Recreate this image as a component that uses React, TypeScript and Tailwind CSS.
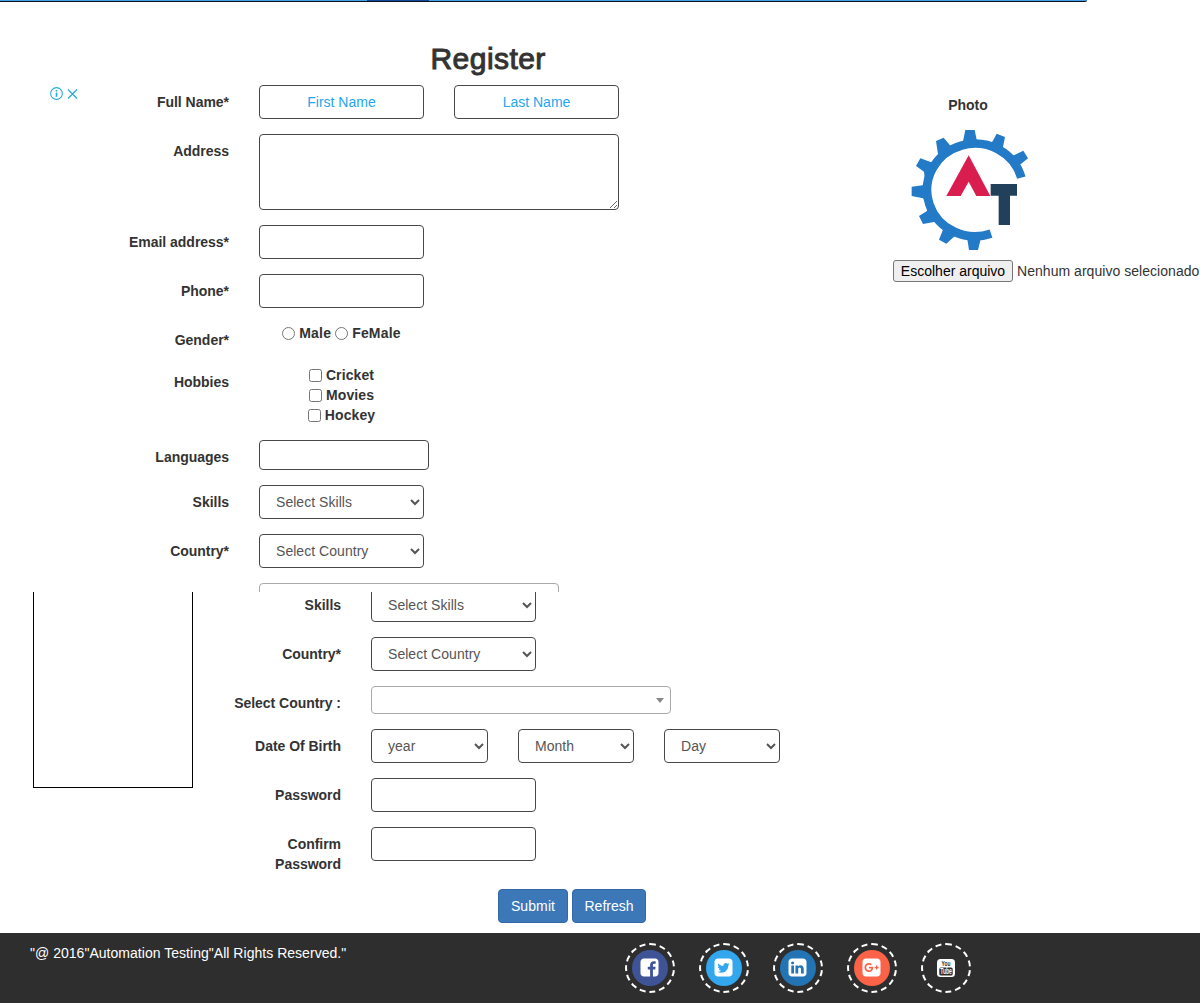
import type { ReactNode } from 'react';

const control = 'h-[34px] rounded border border-[#484848] bg-white text-sm text-[#555]';

function Row({ label, children, wide = false }: { label: string; children: ReactNode; wide?: boolean }) {
  return (
    <div className="flex items-start gap-[30px]">
      <div className={`shrink-0 pt-[7px] text-right font-bold tracking-[-0.03px] ${wide ? 'w-[112px]' : 'w-[109px]'}`}>{label}</div>
      {children}
    </div>
  );
}

function Select({ text, size = 'w-[165px]' }: { text: string; size?: string }) {
  return (
    <select className={`${control} ${size} px-3 py-1.5 tracking-[0.04px]`}>
      <option>{text}</option>
    </select>
  );
}

function Input({ placeholder, size = 'w-[165px]' }: { placeholder?: string; size?: string }) {
  return (
    <input
      className={`${control} ${size} px-3 text-center placeholder:text-[#22a7f0]`}
      placeholder={placeholder}
    />
  );
}

function Check({ text }: { text: string }) {
  return (
    <label className="flex h-5 items-center justify-center gap-1 font-bold tracking-[0.1px]">
      <input type="checkbox" className="size-[13px]" />
      {text}
    </label>
  );
}

function Logo() {
  return (
    <svg viewBox="90 147 360 369" className="ml-[17px] h-[123px] w-[120px]">
      <g fill="#237ac6">
        <path d="M424 293A144 139 0 1 0 333 461" fill="none" stroke="#237ac6" strokeWidth="26" />
        <path d="M256 150H284L291 184L295 192L240 196L249 184Z" />
        <path d="M350 161L375 171L368 206L330 190L338 184Z" />
        <path d="M388 232L397 228L430 212L444 235L420 254L416 272Z" />
        <path d="M168 183L191 173L210 196L220 206L176 232L173 216Z" />
        <path d="M121 235L154 247L166 248L134 292L132 275L108 258Z" />
        <path d="M95 320L128 316L140 310L142 366L129 355L95 348Z" />
        <path d="M117 408L142 392L148 380L178 428L162 426L129 432Z" />
        <path d="M177 479L190 446L188 436L234 464L222 470L199 491Z" />
        <path d="M256 468H308L302 478L294 510H267L262 478Z" />
      </g>
      <path d="M266 226L331 348H289L266 305L242 348H199Z" fill="#d91e4f" />
      <path d="M332 312H411V347H390V435H356V347H332Z" fill="#23405b" />
    </svg>
  );
}

const square =
  'M1664 416v960q0 119-84.5 203.5t-203.5 84.5h-960q-119 0-203.5-84.5t-84.5-203.5v-960q0-119 84.5-203.5t203.5-84.5h960q119 0 203.5 84.5t84.5 203.5z';

const socials = [
  {
    name: 'Facebook',
    bg: 'bg-[#3f5497]',
    d: 'M1376 128q119 0 203.5 84.5t84.5 203.5v960q0 119-84.5 203.5t-203.5 84.5h-188v-595h199l30-232h-229v-148q0-56 23.5-84t91.5-28l122-1v-207q-63-9-178-9-136 0-217.5 80t-81.5 226v171h-200v232h200v595h-532q-119 0-203.5-84.5t-84.5-203.5v-960q0-119 84.5-203.5t203.5-84.5h960z',
  },
  {
    name: 'Twitter',
    bg: 'bg-[#32a7ee]',
    d: 'M1408 610q-56 25-121 34 68-40 93-117-65 38-134 51-61-66-153-66-87 0-148.5 61.5t-61.5 148.5q0 29 5 48-129-7-242-65t-192-155q-29 50-29 106 0 114 91 175-47-1-100-26v2q0 75 50 133.5t123 72.5q-29 8-51 8-13 0-39-4 21 63 74.5 104t121.5 42q-116 90-261 90-26 0-50-3 148 94 322 94 112 0 210-35.5t168-95 120.5-137 75-162 24.5-168.5q0-18-1-27 63-45 105-109z' + square,
  },
  {
    name: 'LinkedIn',
    bg: 'bg-[#2274b5]',
    d: 'M365 1414h231v-694h-231v694zm246-908q-1-52-36-86t-93-34-94.5 34-36.5 86q0 51 35.5 85.5t92.5 34.5h1q59 0 95-34.5t36-85.5zm585 908h231v-398q0-154-73-233t-193-79q-136 0-209 117h2v-101h-231q3 66 0 694h231v-388q0-38 7-56 15-35 45-59.5t74-24.5q116 0 116 157v371z' + square,
  },
  {
    name: 'Google Plus',
    bg: 'bg-[#fb6348]',
    d: 'M1045 905q0-26-6-64h-362v132h217q-3 24-16.5 50t-37.5 53-66.5 44.5-96.5 17.5q-99 0-169-71t-70-171 70-171 169-71q92 0 153 59l104-101q-108-100-257-100-160 0-272 112.5t-112 271.5 112 271.5 272 112.5q165 0 266.5-105t101.5-270zm345 46h109v-110h-109v-110h-110v110h-110v110h110v110h110v-110z' + square,
  },
  { name: 'YouTube', bg: 'bg-[#2e2e2e]', d: '' },
];

export default function App() {
  return (
    <div className="h-[1003px] w-[1200px] overflow-hidden bg-white font-['Liberation_Sans',Arial,sans-serif] text-sm leading-5 text-[#333]">
      <section className="h-[592px] overflow-hidden">
        <div className="flex h-0.5 w-[1087px] rounded-br-sm border-b border-[#0b1420] bg-[#429fea]">
          <div className="ml-[367px] w-[62px] bg-[#12499a]" />
        </div>
        <div className="flex pt-[83px]">
          <div className="flex w-[120px] gap-1 pl-[50px] pt-[2px]">
            <svg viewBox="0 0 12 12" className="size-[13px]" fill="none" stroke="#27aad1">
              <circle cx="6" cy="6" r="5.4" />
              <path d="M6 5v4M6 2.8v1.3" strokeWidth="1.5" />
            </svg>
            <svg viewBox="0 0 12 12" className="-ml-px mt-[0.5px] size-3" fill="none" stroke="#27aad1" strokeWidth="1.2">
              <path d="M2 1.5l9 9M11 1.5l-9 9" />
            </svg>
          </div>
          <div className="relative flex w-[773px] flex-col gap-[15px]">
            <h2 className="absolute -top-[43px] left-[310.5px] text-[30px] leading-[33px] tracking-[0.45px] [-webkit-text-stroke:1px_#333]">
              Register
            </h2>
            <Row label="Full Name*">
              <Input placeholder="First Name" />
              <Input placeholder="Last Name" />
            </Row>
            <Row label="Address">
              <textarea className="h-[76px] w-[360px] rounded border border-[#484848]" />
            </Row>
            <Row label="Email address*"><Input /></Row>
            <Row label="Phone*"><Input /></Row>
            <Row label="Gender*">
              <div className="flex w-[165px] items-center justify-center gap-1 font-bold tracking-[0.2px]">
                <input type="radio" className="size-[13px]" />
                <span>Male</span>
                <input type="radio" className="size-[13px]" />
                <span>FeMale</span>
              </div>
            </Row>
            <Row label="Hobbies">
              <div className="w-[165px]">
                <Check text="Cricket" />
                <Check text="Movies" />
                <Check text="Hockey" />
              </div>
            </Row>
            <Row label="Languages">
              <div className="h-[30px] w-[170px] rounded border border-[#484848]" />
            </Row>
            <Row label="Skills"><Select text="Select Skills" /></Row>
            <Row label="Country*"><Select text="Select Country" /></Row>
            <Row label=""><div className="h-7 w-[300px] rounded border border-[#aaa]" /></Row>
          </div>
          <div className="w-[307px] pt-2.5">
            <div className="w-[150px] text-center font-bold">Photo</div>
            <div className="mt-[14px]"><Logo /></div>
            <div className="mt-2 flex items-center gap-1 whitespace-nowrap">
              <button className="h-[22px] w-[120px] shrink-0 rounded-[3px] border border-[#767676] bg-[#efefef] text-black">
                Escolher arquivo
              </button>
              <span className="tracking-[0.04px]">Nenhum arquivo selecionado</span>
            </div>
          </div>
        </div>
      </section>

      <section className="flex h-[341px] overflow-hidden">
        <div className="ml-[33px] h-[196px] w-40 border border-t-0 border-black" />
        <div className="-mt-1 ml-9 flex flex-col gap-[15px]">
          <Row wide label="Skills"><Select text="Select Skills" /></Row>
          <Row wide label="Country*"><Select text="Select Country" /></Row>
          <Row wide label="Select Country :">
            <div className="flex h-7 w-[300px] items-center justify-end rounded border border-[#aaa] pr-1.5">
              <div className="border-x-4 border-t-[5px] border-x-transparent border-t-[#888]" />
            </div>
          </Row>
          <Row wide label="Date Of Birth">
            <Select text="year" size="w-[117px]" />
            <Select text="Month" size="w-[116px]" />
            <Select text="Day" size="w-[116px]" />
          </Row>
          <Row wide label="Password"><Input /></Row>
          <Row wide label="Confirm Password"><Input /></Row>
          <div className="ml-[269px] flex gap-1 text-white">
            <button className="h-[34px] w-[70px] rounded border border-[#3569a6] bg-[#3c77b8] tracking-[0.1px]">Submit</button>
            <button className="h-[34px] w-[74px] rounded border border-[#3569a6] bg-[#3c77b8]">Refresh</button>
          </div>
        </div>
      </section>

      <footer className="flex h-[70px] bg-[#2e2e2e] text-white">
        <p className="w-[625px] pl-[30px] pt-2.5 tracking-[0.03px]">"@ 2016"Automation Testing"All Rights Reserved."</p>
        <div className="flex gap-6 pt-2.5">
          {socials.map((s) => (
            <a
              key={s.name}
              aria-label={s.name}
              className="flex size-[50px] items-center justify-center rounded-full border-2 border-dashed border-white"
            >
              <span className={`flex size-9 items-center justify-center rounded-full ${s.bg}`}>
                {s.d ? (
                  <svg viewBox="0 0 1792 1792" className="mb-px mr-px size-[21px] fill-white">
                    <path fillRule="evenodd" d={s.d} />
                  </svg>
                ) : (
                  <svg viewBox="0 0 18 18" className="mr-px size-[18px] font-['Liberation_Sans',sans-serif] font-bold">
                    <rect width="18" height="18" rx="3.5" fill="#fff" />
                    <rect x="2.3" y="8.4" width="13.4" height="8" rx="1.5" fill="#2e2e2e" />
                    <text x="4.6" y="7.2" fontSize="8" textLength="8.8" lengthAdjust="spacingAndGlyphs" fill="#2e2e2e">You</text>
                    <text x="3.3" y="15.4" fontSize="8.5" textLength="11.6" lengthAdjust="spacingAndGlyphs" fill="#fff">Tube</text>
                  </svg>
                )}
              </span>
            </a>
          ))}
        </div>
      </footer>
    </div>
  );
}
